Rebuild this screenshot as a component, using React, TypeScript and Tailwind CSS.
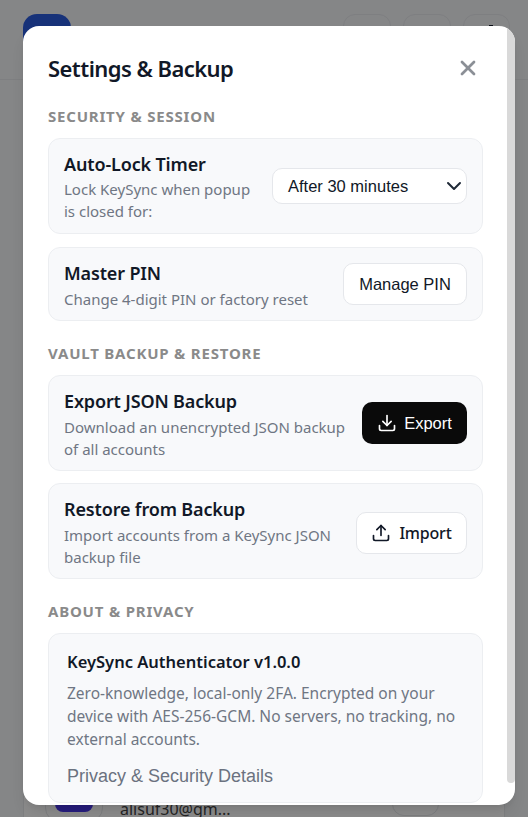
import React from "react";
import { Download, Upload, X, ChevronDown } from "lucide-react";

const SEGOE = "font-['Noto_Sans',sans-serif]";
const ARIAL = "font-['Liberation_Sans',Arial,sans-serif]";

function Heading({ children, className = "" }: { children: React.ReactNode; className?: string }) {
  return <h3 className={`text-[15px] leading-[20px] font-bold tracking-[0.8px] text-[#8a8a8a] mb-[12px] ${className}`}>{children}</h3>;
}

function Row({ title, desc, action, className = "", descClass = "" }: { title: string; desc: React.ReactNode; action: React.ReactNode; className?: string; descClass?: string }) {
  return (
    <div className={`flex items-center justify-between bg-[#f8f9fb] border border-[#eceef1] rounded-[12px] pl-[15px] pr-[15px] py-[11px] mb-[12px] ${className}`}>
      <div className="min-w-0">
        <div className="text-[18px] leading-[28px] font-semibold tracking-[-0.15px] text-[#111827]">{title}</div>
        <div className={`text-[15px] leading-[22px] text-[#6f7683] ${descClass}`}>{desc}</div>
      </div>
      {action}
    </div>
  );
}

const whiteBtn = "flex items-center bg-white border border-[#e5e7eb] rounded-[10px] text-[16.5px] text-[#111827]";

export default function App() {
  return (
    <div className={`relative w-[528px] h-[817px] overflow-hidden bg-[#f3f4f6] ${SEGOE}`}>
      {/* page behind the dialog */}
      <div className="flex items-start justify-between h-[80px] border-b border-[#e5e7eb] pl-[23px] pr-[18px] pt-[14px]">
        <div className="w-[48px] h-[48px] rounded-[14px] bg-[#2a5bdc]" />
        <div className="flex gap-[12px]">
          <div className="w-[48px] h-[48px] rounded-[12px] border border-[#e5e7eb]" />
          <div className="w-[48px] h-[48px] rounded-[12px] border border-[#e5e7eb]" />
          <div className="relative w-[47px] h-[48px] rounded-[12px] border border-[#e5e7eb]">
            <div className="absolute left-[25px] top-[10px] w-[4px] h-[2px] bg-[#111827]" />
          </div>
        </div>
      </div>
      <div className="absolute left-[23px] top-[770px] w-[482px] h-[80px] border border-[#e5e7eb] bg-white rounded-[12px] flex">
        <div className="ml-[21px] mt-[-7px] w-[58px] h-[58px] rounded-[14px] border border-[#e5e7eb] flex items-center justify-center">
          <div className="w-[38px] h-[38px] rounded-[8px] bg-[#4a38e8]" />
        </div>
        <div className="ml-[17px] mt-[28px] text-[16px] leading-[20px] text-[#444]">alisuf30@gm...</div>
        <div className="absolute left-[368px] top-[-10px] w-[47px] h-[55px] rounded-[12px] border border-[#e5e7eb]" />
      </div>

      {/* overlay */}
      <div className="absolute inset-0 bg-black/45" />

      {/* dialog */}
      <div className="absolute left-[23px] top-[26px] w-[492px] h-[779px] bg-white rounded-[16px] overflow-hidden shadow-lg">
        <div className="h-full overflow-hidden pl-[25px] pr-[32px] pt-[24px]">
          <div className="flex items-center justify-between mb-[20px]">
            <h2 className="text-[22px] leading-[36px] font-semibold tracking-[-0.55px] text-[#111827]">Settings &amp; Backup</h2>
            <X className="w-[24px] h-[24px] mr-[3px] text-[#8b8f96]" strokeWidth={2.75} />
          </div>

          <Heading>SECURITY &amp; SESSION</Heading>
          <Row
            className="mb-[13px]"
            title="Auto-Lock Timer"
            desc={<>Lock KeySync when popup<br />is closed for:</>}
            action={
              <div className={`${whiteBtn} ${ARIAL} justify-between w-[195px] h-[36px] pl-[15px] shrink-0`}>
                <span>After 30 minutes</span>
                <ChevronDown className="w-[24px] h-[24px] text-[#1f2937]" strokeWidth={2} />
              </div>
            }
          />
          <Row
            descClass="translate-y-[1px]"
            title="Master PIN"
            desc="Change 4-digit PIN or factory reset"
            action={<button className={`${whiteBtn} ${ARIAL} justify-center w-[124px] h-[42px] shrink-0`}>Manage PIN</button>}
          />

          <Heading className="mt-[22px]">VAULT BACKUP &amp; RESTORE</Heading>
          <Row
            descClass="translate-y-[1px]"
            title="Export JSON Backup"
            desc={<>Download an unencrypted JSON backup<br />of all accounts</>}
            action={
              <button className={`${ARIAL} flex items-center justify-center gap-[7px] w-[105px] h-[42px] shrink-0 rounded-[10px] bg-[#0a0a0a] text-white text-[16.5px]`}>
                <Download className="w-[20px] h-[20px]" strokeWidth={2} />Export
              </button>
            }
          />
          <Row
            descClass="translate-y-[1px]"
            title="Restore from Backup"
            desc={<>Import accounts from a KeySync JSON<br />backup file</>}
            action={
              <button className={`${whiteBtn} !text-[16px] tracking-[-0.2px] font-medium justify-center gap-[8px] w-[111px] h-[42px] mt-[3px] shrink-0`}>
                <Upload className="w-[20px] h-[20px]" strokeWidth={2} />Import
              </button>
            }
          />

          <Heading className="mt-[22px]">ABOUT &amp; PRIVACY</Heading>
          <div className="bg-[#f8f9fb] border border-[#eceef1] rounded-[12px] px-[18px] pt-[16px] pb-[14px]">
            <div className="text-[16.5px] leading-[24px] font-semibold text-[#111827] mb-[8px]">KeySync Authenticator v1.0.0</div>
            <div className="text-[15.5px] leading-[23px] text-[#6f7683] mb-[13px]">
              Zero-knowledge, local-only 2FA. Encrypted on your<br />device with AES-256-GCM. No servers, no tracking, no<br />external accounts.
            </div>
            <div className={`${ARIAL} text-[18px] leading-[24px] text-[#6b7280]`}>Privacy &amp; Security Details</div>
          </div>
        </div>
        {/* scrollbar thumb */}
        <div className="absolute right-0 top-0 w-[8px] h-[757px] rounded-b-[4px] bg-[#d9d9d9]" />
      </div>
    </div>
  );
}
